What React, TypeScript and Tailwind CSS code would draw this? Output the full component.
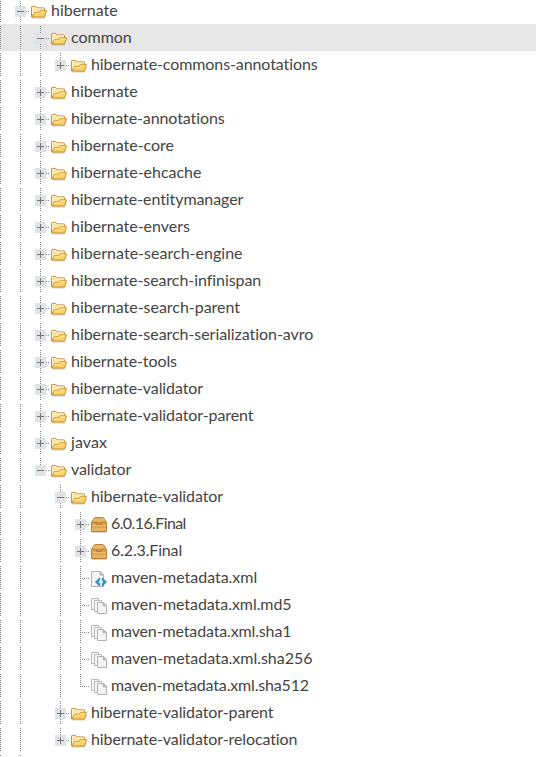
import React from "react";

type Kind = "folder" | "package" | "xml" | "files";
type Row = {
  label: string;
  depth: number;
  guides: number[];
  kind: Kind;
  state: "plus" | "minus" | "leaf";
  last?: boolean;
  selected?: boolean;
  tracking?: string;
};

const group = (label: string, tracking?: string): Row => ({ label, tracking, depth: 2, guides: [0, 1], kind: "folder", state: "plus" });
const artifact = (label: string, kind: Kind, tracking?: string): Row => ({
  label,
  tracking,
  depth: 4,
  guides: [0, 1, 3],
  kind,
  state: kind === "package" ? "plus" : "leaf",
});

const rows: Row[] = [
  { label: "hibernate", depth: 1, guides: [0], kind: "folder", state: "minus" },
  { ...group("common"), state: "minus", selected: true },
  { label: "hibernate-commons-annotations", depth: 3, guides: [0, 1, 2], kind: "folder", state: "plus", last: true, tracking: "tracking-[-0.1px]" },
  group("hibernate"),
  group("hibernate-annotations", "tracking-[-0.1px]"),
  group("hibernate-core"),
  group("hibernate-ehcache"),
  group("hibernate-entitymanager", "tracking-[-0.08px]"),
  group("hibernate-envers"),
  group("hibernate-search-engine", "tracking-[0.02px]"),
  group("hibernate-search-infinispan", "tracking-[-0.06px]"),
  group("hibernate-search-parent"),
  group("hibernate-search-serialization-avro", "tracking-[-0.05px]"),
  group("hibernate-tools", "tracking-[-0.1px]"),
  group("hibernate-validator", "tracking-[-0.1px]"),
  group("hibernate-validator-parent", "tracking-[-0.1px]"),
  group("javax", "tracking-[0.1px]"),
  { ...group("validator", "tracking-[-0.1px]"), state: "minus", last: true },
  { label: "hibernate-validator", depth: 3, guides: [0, 1], kind: "folder", state: "minus", tracking: "tracking-[-0.1px]" },
  artifact("6.0.16.Final", "package", "tracking-[-0.6px]"),
  artifact("6.2.3.Final", "package", "tracking-[-0.15px]"),
  artifact("maven-metadata.xml", "xml"),
  artifact("maven-metadata.xml.md5", "files", "tracking-[-0.06px]"),
  artifact("maven-metadata.xml.sha1", "files", "tracking-[-0.14px]"),
  artifact("maven-metadata.xml.sha256", "files"),
  { ...artifact("maven-metadata.xml.sha512", "files", "tracking-[-0.17px]"), last: true },
  { label: "hibernate-validator-parent", depth: 3, guides: [0, 1], kind: "folder", state: "plus", tracking: "tracking-[-0.1px]" },
  { label: "hibernate-validator-relocation", depth: 3, guides: [0, 1], kind: "folder", state: "plus", last: true, tracking: "tracking-[-0.1px]" },
];

function Guide({ show }: { show: boolean }) {
  return (
    <svg className="h-[27px] w-5 shrink-0" viewBox="0 0 20 27" shapeRendering="crispEdges">
      {show && <path d="M.5 2V25" stroke="#888" strokeDasharray="1 1" />}
    </svg>
  );
}

function Branch({ state, last }: { state: Row["state"]; last?: boolean }) {
  return (
    <svg className="h-[27px] w-[11px] shrink-0 overflow-visible" viewBox="0 0 11 27" fill="none" shapeRendering="crispEdges">
      <path d={last ? "M.5 2V15" : "M.5 2V25"} stroke="#888" strokeDasharray="1 1" />
      <path d={state === "leaf" ? "M2 14.5H10" : "M6 14.5H10"} stroke="#888" strokeDasharray="1 1" />
      {state !== "leaf" && (
        <>
          <path d="M-5 9h11v11h-11z" fill="#dfe2e6" />
          <path d="M-3 14.5h7" stroke="#777" />
          {state === "plus" && <path d="M.5 11v7" stroke="#777" />}
        </>
      )}
    </svg>
  );
}

function Icon({ kind }: { kind: Kind }) {
  return (
    <svg className="mt-[7px] h-4 w-4 shrink-0 self-start" viewBox="0 0 16 16" fill="none">
      {kind === "folder" && (
        <>
          <path d="M1 14h13" stroke="#000" strokeOpacity=".18" />
          <path d="M.5 12.8V3.2q0-.8.8-.8h3.4l1.3 1.5h6.7q.8 0 .8.8v8.1z" fill="#fbe39a" stroke="#cb8f36" />
          <path d="M1.6 11V3.5h2.7l1.3 1.5h6.8v1.6" stroke="#fff5cc" />
          <path d="M.9 13 3.2 8.8h4.4l1.7-2h6.2L13.6 13z" fill="#fbd365" stroke="#cb8f36" strokeLinejoin="round" />
          <path d="M3.1 10.2 3.8 9.8h4.3l1.7-2h4.3" stroke="#fff0ad" strokeWidth=".9" />
        </>
      )}
      {kind === "package" && (
        <>
          <path d="M1 15.4h14" stroke="#000" strokeOpacity=".2" />
          <path d="M.5 5.5 3 1.4q.4-.9 1.3-.9h7.4q.9 0 1.3.9l2.5 4.1v9H.5z" fill="#dfa650" stroke="#b98136" />
          <path d="M3.7 1.5h8.6l1.8 3H1.9z" fill="#e8b86f" />
          <path d="M1 5.5h14" stroke="#bd8438" />
          <path d="M5.5 5.5v2h5v-2" fill="#d59a45" stroke="#b57d34" />
          <path d="M1.5 8.5h13" stroke="#f0c77f" strokeWidth=".8" />
          <path d="M1 11h14v3H1z" fill="#e7b561" />
        </>
      )}
      {kind === "xml" && (
        <>
          <path d="M.5.5h8.7l3.3 3.3v11.7H.5z" fill="#f5f5f5" stroke="#b5b5b5" />
          <path d="M9 .5v3.6h3.5z" fill="#ddd" stroke="#aaa" />
          <path d="M8.6 7 4.4 11l4.2 4v-2.5L7.3 11l1.3-1.5zM11.4 7l4.2 4-4.2 4v-2.5l1.3-1.5-1.3-1.5z" fill="#3c9bd0" stroke="#1677b0" strokeWidth=".8" />
        </>
      )}
      {kind === "files" && (
        <>
          <path d="M.5.5h7v11h-7z" fill="#f7f7f7" stroke="#b8b8b8" />
          <path d="M3.5 2.5h7v11h-7z" fill="#f7f7f7" stroke="#b8b8b8" />
          <path d="M6.5 4.5h6l3 3v8h-9z" fill="#f4f4f4" stroke="#b0b0b0" />
          <path d="M12.2 4.8v3h3z" fill="#ccc" stroke="#a5a5a5" strokeWidth=".8" />
        </>
      )}
    </svg>
  );
}

export default function App() {
  return (
    <div className="h-[757px] overflow-hidden bg-white font-['Lato','Noto_Sans',sans-serif] text-base text-[#444]">
      <div className="-mt-[3px] flex flex-col">
        {rows.map((r, i) => (
          <div key={i} className={`flex h-[27px] shrink-0 ${r.selected ? "bg-[#e7e7e7]" : ""}`}>
            {Array.from({ length: r.depth }, (_, k) => (
              <Guide key={k} show={r.guides.includes(k)} />
            ))}
            <Branch state={r.state} last={r.last} />
            <Icon kind={r.kind} />
            <span className={`ml-1 whitespace-nowrap leading-[25px] ${r.tracking ?? "tracking-[-0.03px]"}`}>{r.label}</span>
          </div>
        ))}
        <div className="flex h-[27px] shrink-0">
          <Guide show />
          <Guide show />
        </div>
      </div>
    </div>
  );
}
